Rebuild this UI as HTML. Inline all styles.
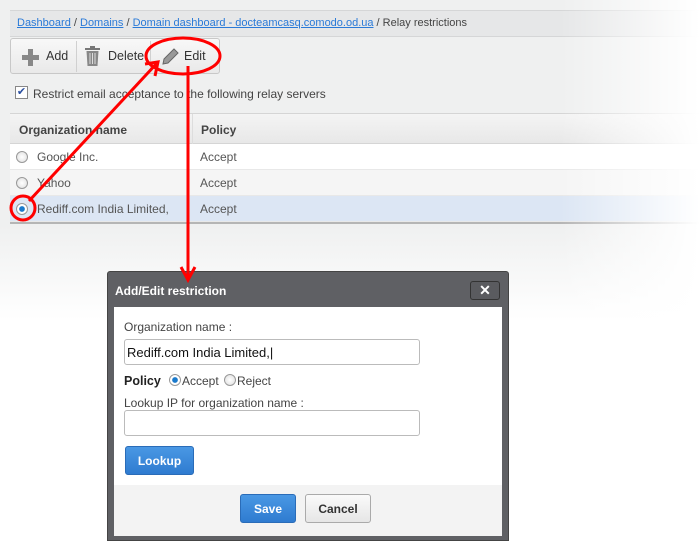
<!DOCTYPE html>
<html><head><style>
*{margin:0;padding:0;box-sizing:border-box}
body{width:700px;height:541px;position:relative;overflow:hidden;background:#fff;font-family:"Liberation Sans",sans-serif;font-size:12px;color:#333}
.bg{position:absolute;left:0;top:0;width:700px;height:320px;background:linear-gradient(#eff0f0 0,#eff0f0 225px,#fff 320px)}
.abs{position:absolute}
.crumb{left:10px;top:10px;width:690px;height:27px;background:#e6e7e8;border-top:1px solid #d5d6d7;border-bottom:1px solid #d5d6d7;padding:6px 0 0 7px;font-size:11px;color:#444}
.crumb a{color:#2a7ad8;text-decoration:underline}
.tb{left:10px;top:38px;width:210px;height:36px;border:1px solid #c8c8c8;border-radius:3px;background:linear-gradient(#f8f8f8,#e9e9e9)}
.tb span{position:absolute;top:10px;font-size:12.5px;color:#333}
.sep{position:absolute;top:2px;width:1px;height:31px;background:#d0d0d0}
.tbl{left:10px;top:113px;width:690px;height:111px;border-top:1px solid #d5d5d5;border-bottom:3px solid #b5b5b5}
.row{position:absolute;left:0;width:690px;height:26px;border-bottom:1px solid #e8e8e8;font-size:12px;color:#555}
.row span{position:absolute;top:6px}
.rad{position:absolute;width:12px;height:12px;border-radius:50%;border:1px solid #999;background:radial-gradient(#fff,#ddd)}
.fade{position:absolute}
.dlg{left:107px;top:271px;width:402px;height:270px;background:#5f6064;border:1px solid #444;border-radius:3px 3px 0 0}
.inp{position:absolute;left:16px;width:296px;height:26px;border:1px solid #bbb;border-radius:3px;background:#fff}
.btn{position:absolute;height:29px;border-radius:3px;font-weight:bold;font-size:12px;text-align:center;line-height:28px}
</style></head><body>
<div class="bg"></div>
<div class="abs crumb"><a>Dashboard</a> / <a>Domains</a> / <a>Domain dashboard - docteamcasq.comodo.od.ua</a> / Relay restrictions</div>
<div class="abs tb">
 <svg class="abs" style="left:11px;top:10px" width="17" height="17"><path d="M6 0h5v6h6v5h-6v6H6v-6H0V6h6z" fill="#888"/></svg>
 <span style="left:35px">Add</span>
 <div class="sep" style="left:65px"></div>
 <svg class="abs" style="left:73px;top:7px" width="17" height="21"><rect x="1" y="2" width="15" height="2" fill="#777"/><rect x="6" y="0" width="5" height="3" fill="#777"/><path d="M2.5 5h12l-1 15h-10z" fill="#888"/><path d="M6 7v11M8.5 7v11M11 7v11" stroke="#ddd" stroke-width="1"/></svg>
 <span style="left:97px">Delete</span>
 <div class="sep" style="left:139px"></div>
 <svg class="abs" style="left:150px;top:9px" width="18" height="18"><path d="M2 16l1-5 10-10 4 4-10 10z" fill="#999" stroke="#666" stroke-width="1"/></svg>
 <span style="left:173px">Edit</span>
</div>
<div class="abs" style="left:15px;top:86px;width:13px;height:13px;border:1px solid #888;background:#fff;font-size:11px;line-height:11px;color:#2a4fa0;text-align:center">✔</div>
<div class="abs" style="left:33px;top:87px;font-size:12px;color:#444">Restrict email acceptance to the following relay servers</div>
<div class="abs tbl">
 <div class="row" style="top:0;height:30px;background:linear-gradient(#f4f4f4,#e8e8e8);font-weight:bold;color:#444;border-bottom:1px solid #d5d5d5"><span style="left:9px;top:9px">Organization name</span><span style="left:191px;top:9px">Policy</span></div>
 <div class="abs" style="left:182px;top:0;width:1px;height:108px;background:#ddd"></div>
 <div class="row" style="top:30px;background:#fff"><div class="rad" style="left:6px;top:7px"></div><span style="left:27px">Google Inc.</span><span style="left:190px">Accept</span></div>
 <div class="row" style="top:56px;background:#f5f5f5"><div class="rad" style="left:6px;top:7px"></div><span style="left:27px">Yahoo</span><span style="left:190px">Accept</span></div>
 <div class="row" style="top:82px;background:#dce6f4"><div class="rad" style="left:6px;top:7px;background:radial-gradient(#1a7acc 35%,#fff 45%)"></div><span style="left:27px">Rediff.com India Limited,</span><span style="left:190px">Accept</span></div>
</div>
<div class="fade" style="left:560px;top:0;width:140px;height:320px;background:linear-gradient(90deg,rgba(255,255,255,0),#fff)"></div>
<div class="abs dlg">
 <div class="abs" style="left:7px;top:12px;color:#fff;font-weight:bold;font-size:12px">Add/Edit restriction</div>
 <div class="abs" style="left:362px;top:9px;width:30px;height:19px;border:1px solid #333;border-radius:3px;background:#5a5b5f;color:#fff;text-align:center;font-weight:bold;font-size:14px;line-height:17px">✕</div>
 <div class="abs" style="left:6px;top:35px;width:388px;height:178px;background:#fff">
  <div class="abs" style="left:10px;top:13px;color:#444">Organization name :</div>
  <div class="inp" style="left:10px;top:32px;font-size:13px;color:#111;padding:5px 0 0 2px">Rediff.com India Limited,|</div>
  <div class="abs" style="left:10px;top:67px;font-weight:bold;font-size:12.5px;color:#222">Policy</div>
  <div class="rad" style="left:55px;top:67px;background:radial-gradient(#1a7acc 35%,#fff 45%)"></div>
  <div class="abs" style="left:68px;top:67px;color:#444">Accept</div>
  <div class="rad" style="left:110px;top:67px"></div>
  <div class="abs" style="left:123px;top:67px;color:#444">Reject</div>
  <div class="abs" style="left:10px;top:89px;color:#444">Lookup IP for organization name :</div>
  <div class="inp" style="left:10px;top:103px"></div>
  <div class="btn" style="left:11px;top:139px;width:69px;background:linear-gradient(#4a98e4,#2f7bd0);border:1px solid #2a6cb8;color:#fff">Lookup</div>
 </div>
 <div class="abs" style="left:6px;top:213px;width:388px;height:51px;background:#f3f3f3">
  <div class="btn" style="left:126px;top:9px;width:56px;background:linear-gradient(#4a98e4,#2f7bd0);border:1px solid #2a6cb8;color:#fff">Save</div>
  <div class="btn" style="left:191px;top:9px;width:66px;background:linear-gradient(#fafafa,#e6e6e6);border:1px solid #aaa;color:#333">Cancel</div>
 </div>
</div>
<svg class="abs" style="left:0;top:0" width="700" height="541">
 <g stroke="#f00" stroke-width="3" fill="none">
  <ellipse cx="183" cy="56" rx="37" ry="18"/>
  <circle cx="23" cy="208" r="12"/>
  <line x1="29" y1="201" x2="158" y2="62"/>
  <polyline points="145,64 158,62 155,76"/>
  <line x1="188" y1="66" x2="188" y2="280"/>
  <polyline points="181,267 188,280 195,267"/>
 </g>
</svg>
</body></html>
